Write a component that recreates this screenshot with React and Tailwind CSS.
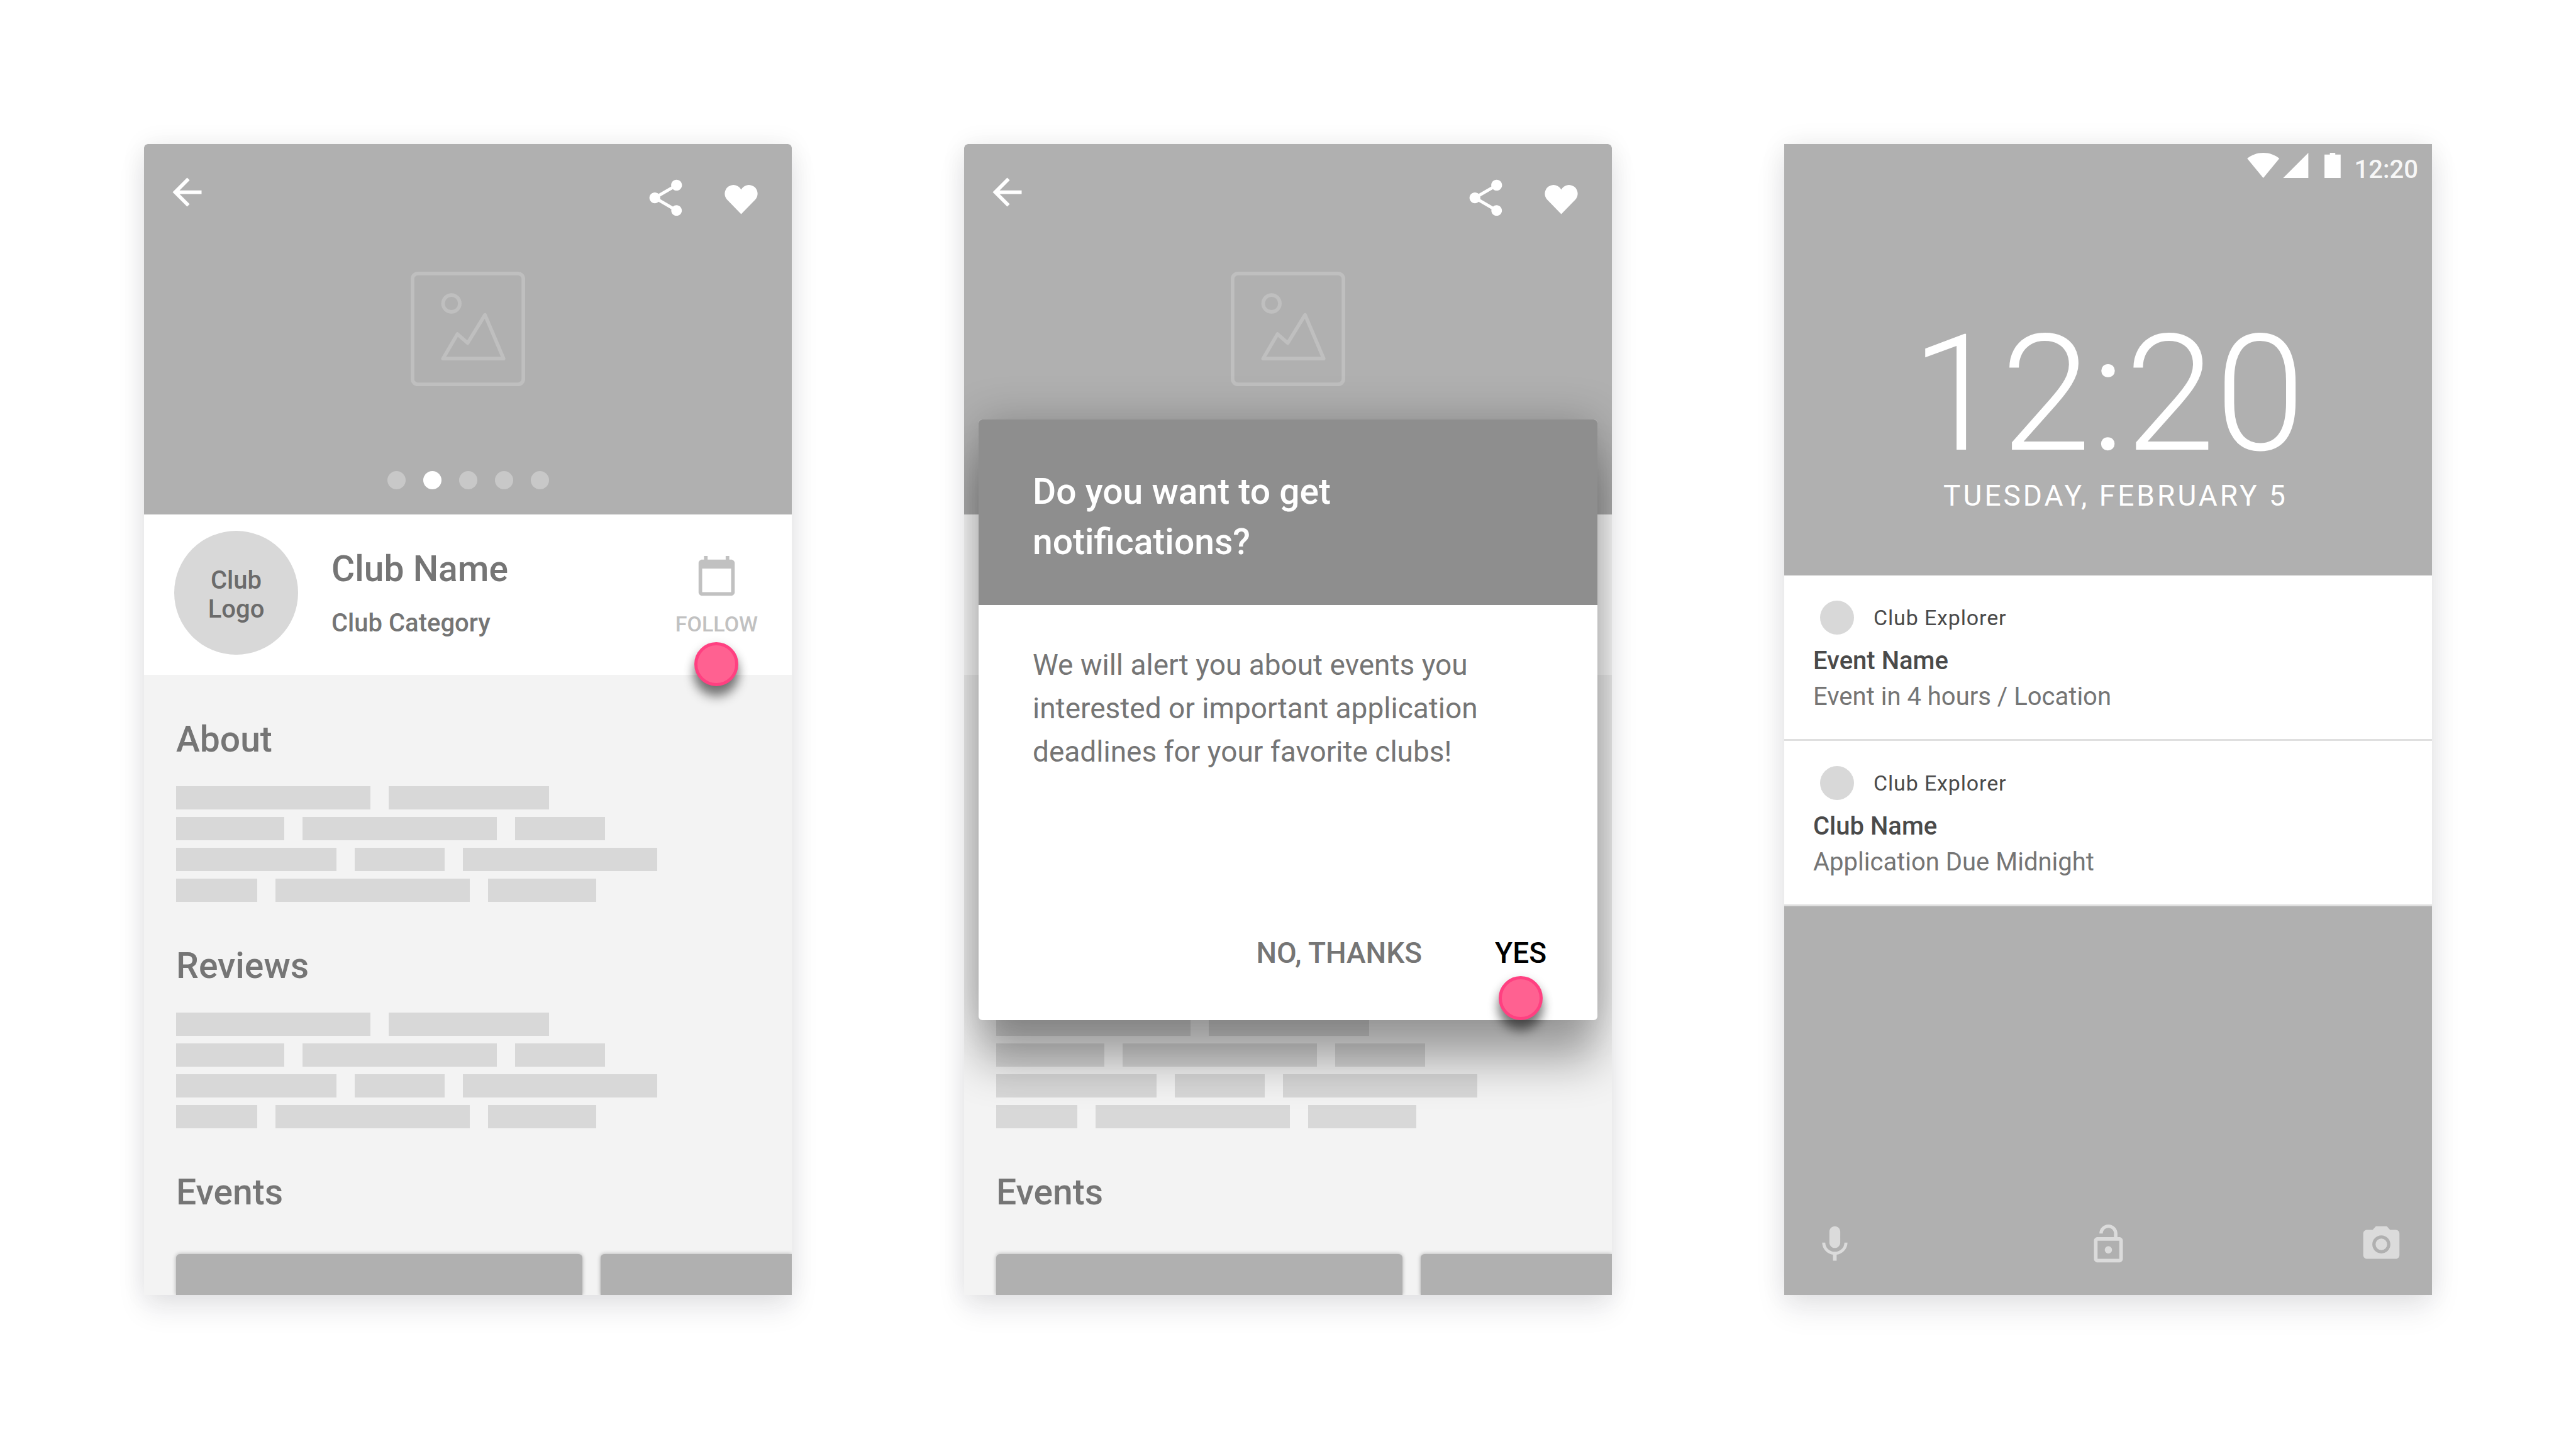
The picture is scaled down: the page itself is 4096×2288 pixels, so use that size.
const ICONS = {
  back: "M20 11H7.83l5.59-5.59L12 4l-8 8 8 8 1.41-1.41L7.83 13H20v-2z",
  share:
    "M18 16.08c-.76 0-1.44.3-1.96.77L8.91 12.7c.05-.23.09-.46.09-.7s-.04-.47-.09-.7l7.05-4.11c.54.5 1.25.81 2.04.81 1.66 0 3-1.34 3-3s-1.34-3-3-3-3 1.34-3 3c0 .24.04.47.09.7L8.04 9.81C7.5 9.31 6.79 9 6 9c-1.66 0-3 1.34-3 3s1.34 3 3 3c.79 0 1.5-.31 2.04-.81l7.12 4.16c-.05.21-.08.43-.08.65 0 1.61 1.31 2.92 2.92 2.92 1.61 0 2.92-1.31 2.92-2.92s-1.31-2.92-2.92-2.92z",
  heart: "M12 21L4.4 13.2A4.82 4.82 0 1 1 12 7.48A4.82 4.82 0 1 1 19.6 13.2Z",
  calendar:
    "M20 3h-1V1h-2v2H7V1H5v2H4c-1.1 0-2 .9-2 2v16c0 1.1.9 2 2 2h16c1.1 0 2-.9 2-2V5c0-1.1-.9-2-2-2zm0 18H4V8h16v13z",
  mic: "M12 14c1.66 0 2.99-1.34 2.99-3L15 5c0-1.66-1.34-3-3-3S9 3.34 9 5v6c0 1.66 1.34 3 3 3zm5.3-3c0 3-2.54 5.1-5.3 5.1S6.7 14 6.7 11H5c0 3.41 2.72 6.23 6 6.72V21h2v-3.28c3.28-.48 6-3.3 6-6.72h-1.7z",
  lockOpen:
    "M12 17c1.1 0 2-.9 2-2s-.9-2-2-2-2 .9-2 2 .9 2 2 2zm6-9h-1V6c0-2.76-2.24-5-5-5S7 3.24 7 6h1.9c0-1.71 1.39-3.1 3.1-3.1 1.71 0 3.1 1.39 3.1 3.1v2H6c-1.1 0-2 .9-2 2v10c0 1.1.9 2 2 2h12c1.1 0 2-.9 2-2V10c0-1.1-.9-2-2-2zm0 12H6V10h12v10z",
  camera:
    "M12 8.8a3.2 3.2 0 1 0 0 6.4a3.2 3.2 0 1 0 0-6.4zM9 2L7.17 4H4c-1.1 0-2 .9-2 2v12c0 1.1.9 2 2 2h16c1.1 0 2-.9 2-2V6c0-1.1-.9-2-2-2h-3.17L15 2H9zm3 15c-2.76 0-5-2.24-5-5s2.24-5 5-5 5 2.24 5 5-2.24 5-5 5z",
};

function Icon({ name }) {
  return (
    <svg viewBox="0 0 24 24" className="block size-[69px] fill-current" aria-hidden="true">
      <path d={ICONS[name]} />
    </svg>
  );
}

function IconButton({ name, label }) {
  return (
    <button type="button" aria-label={label}>
      <Icon name={name} />
    </button>
  );
}

function Phone({ children, className }) {
  return (
    <section
      className={`relative min-w-0 shadow-[0_23px_46px_rgba(20,25,45,0.09),0_0_40px_rgba(0,0,0,0.07)] ${className}`}
    >
      {children}
    </section>
  );
}

/* Circle that marks where the user taps. */
function TapMarker() {
  return (
    <span className="absolute top-full left-1/2 size-[70px] -translate-x-1/2 rounded-full border-[5px] border-[#ff4081] bg-[#ff6191] shadow-[0_17px_17px_rgba(0,0,0,0.45),0_6px_17px_rgba(0,0,0,0.2)]" />
  );
}

function Placeholder() {
  return (
    <svg viewBox="0 0 191 191" className="size-[182px] fill-none stroke-[#bfbfbf]" strokeWidth="6" strokeLinejoin="round" aria-hidden="true">
      <rect x="3" y="3" width="185" height="185" rx="9" />
      <circle cx="68" cy="53" r="14" />
      <path d="M54 145H155L124 72L95 119L78 104Z" />
    </svg>
  );
}

const DOTS = [false, true, false, false, false];

function Hero() {
  return (
    <header className="flex h-[589px] flex-col items-center rounded-t-[6px] bg-[#b0b0b0] pb-10 text-white">
      <div className="mb-[83px] flex w-full items-start justify-between pt-[42px] pr-[46px] pl-[34px]">
        <IconButton name="back" label="Back" />
        <div className="flex gap-[51px] pt-[9px]">
          <IconButton name="share" label="Share" />
          <IconButton name="heart" label="Favorite" />
        </div>
      </div>
      <Placeholder />
      <div className="mt-auto flex gap-7">
        {DOTS.map((on, i) => (
          <span key={i} className={`size-[29px] rounded-full ${on ? "bg-white" : "bg-[#c8c8c8]"}`} />
        ))}
      </div>
    </header>
  );
}

function ClubHeader({ marker }) {
  return (
    <div className="relative z-10 flex items-start bg-white pt-[26px] pr-[54px] pb-8 pl-12 font-medium">
      <div className="flex size-[197px] shrink-0 items-center justify-center rounded-full bg-[#d8d8d8] pt-[6px] text-center text-[40px] leading-[46px] text-[#6b6b6b]">
        Club
        <br />
        Logo
      </div>
      <div className="min-w-0 flex-1 pt-[27px] pl-[53px] text-[#757575]">
        <h1 className="text-[57px] leading-[68px]">Club Name</h1>
        <p className="pt-7 text-[40px] leading-[48px]">Club Category</p>
      </div>
      <button type="button" className="relative mt-[37px] flex flex-col items-center gap-[22px] pb-[9px] text-[34px] leading-[40px] text-[#c1c1c1]">
        <Icon name="calendar" />
        FOLLOW
        {marker && <TapMarker />}
      </button>
    </div>
  );
}

const BAR_ROWS = [
  ["w-[309px]", "w-[255px]"],
  ["w-[172px]", "w-[309px]", "w-[143px]"],
  ["w-[255px]", "w-[143px]", "w-[309px]"],
  ["w-[129px]", "w-[309px]", "w-[172px]"],
];

function TextBars() {
  return (
    <div className="flex flex-col gap-3 pt-10">
      {BAR_ROWS.map((row, i) => (
        <div key={i} className="flex gap-[29px]">
          {row.map((w, j) => (
            <span key={j} className={`h-[37px] bg-[#d8d8d8] ${w}`} />
          ))}
        </div>
      ))}
    </div>
  );
}

function Heading({ children }) {
  return <h2 className="text-[57px] leading-[68px] font-medium text-[#757575]">{children}</h2>;
}

function ClubPage({ marker }) {
  return (
    <div className="flex h-full flex-col overflow-hidden rounded-t-[6px] bg-[#f3f3f3]">
      <Hero />
      <ClubHeader marker={marker} />
      <div className="flex min-h-0 flex-1 flex-col gap-[68px] pt-[69px] pl-[51px]">
        <div>
          <Heading>About</Heading>
          <TextBars />
        </div>
        <div>
          <Heading>Reviews</Heading>
          <TextBars />
        </div>
        <div className="flex min-h-0 flex-1 flex-col">
          <Heading>Events</Heading>
          <div className="mt-16 flex flex-1 gap-[29px]">
            <div className="w-[646px] shrink-0 rounded-t-[6px] bg-[#b0b0b0] shadow-[0_0_6px_rgba(0,0,0,0.3)]" />
            <div className="flex-1 rounded-tl-[6px] bg-[#b0b0b0] shadow-[0_0_6px_rgba(0,0,0,0.3)]" />
          </div>
        </div>
      </div>
    </div>
  );
}

function Dialog() {
  return (
    <div
      role="dialog"
      aria-labelledby="dialog-title"
      className="absolute inset-x-[23px] top-[438px] z-20 flex h-[955px] flex-col rounded-[6px] bg-white shadow-[0_69px_69px_rgba(0,0,0,0.3),0_0_69px_rgba(0,0,0,0.22)]"
    >
      <h2
        id="dialog-title"
        className="rounded-t-[6px] bg-[#8e8e8e] pt-[75px] pr-[380px] pb-[60px] pl-[86px] text-[57px] leading-[80px] font-medium text-white"
      >
        Do you want to get notifications?
      </h2>
      <p className="flex-1 pt-[61px] pr-[160px] pl-[86px] text-[46px] leading-[69px] text-[#757575]">
        We will alert you about events you interested or important application deadlines for your favorite clubs!
      </p>
      <div className="flex justify-end gap-[116px] pr-[81px] pb-[70px] text-[46px] leading-[54px] font-medium">
        <button type="button" className="pb-[10px] text-[#757575]">NO, THANKS</button>
        <button type="button" className="relative pb-[10px] text-black">
          YES
          <TapMarker />
        </button>
      </div>
    </div>
  );
}

function Notification({ title, detail }) {
  return (
    <li className="border-b-[3px] border-[#dfdfdf] bg-white pt-10 pb-[39px] pl-[46px]">
      <div className="flex items-center gap-[31px] pl-[11px] text-[34px] leading-[40px] tracking-wide text-[#4a4a4a]">
        <span className="size-[54px] rounded-full bg-[#d8d8d8]" />
        Club Explorer
      </div>
      <h3 className="pt-[13px] text-[40px] leading-[57px] font-medium text-[#4a4a4a]">{title}</h3>
      <p className="text-[40px] leading-[57px] text-[#757575]">{detail}</p>
    </li>
  );
}

function LockScreen() {
  return (
    <div className="flex h-full flex-col bg-[#b0b0b0] text-white">
      <div className="flex h-[54px] items-end justify-end pr-[22px]">
        <svg viewBox="0 0 156 42" className="mr-[22px] h-[40px] w-[149px] fill-white" aria-hidden="true">
          <path d="M0 9.5C7 3.5 16.5 0 26.8 0S46.6 3.5 53.6 9.5L26.8 42z" />
          <path d="M102 0V42H60z" />
          <path d="M138 0h9v3h9v39h-27V3h9z" />
        </svg>
        <span className="-mb-[10px] text-[40px] leading-[46px] font-medium text-[#f7f7f7]">12:20</span>
      </div>
      <div className="flex h-[632px] flex-col items-center">
        <time className="pt-[210px] text-[258px] leading-[268px] font-light">12:20</time>
        <p className="pl-6 text-[46px] leading-[54px] tracking-[4px]">TUESDAY, FEBRUARY 5</p>
      </div>
      <ul>
        <Notification title="Event Name" detail="Event in 4 hours / Location" />
        <Notification title="Club Name" detail="Application Due Midnight" />
      </ul>
      <div className="mt-auto flex justify-between p-[46px] text-[#dbdbdb]">
        <IconButton name="mic" label="Voice search" />
        <IconButton name="lockOpen" label="Unlock" />
        <IconButton name="camera" label="Camera" />
      </div>
    </div>
  );
}

export default function App() {
  return (
    <main className="grid min-h-screen grid-cols-3 gap-[274px] bg-white p-[229px] font-[Roboto,sans-serif]">
      <Phone className="rounded-t-[6px]">
        <ClubPage marker />
      </Phone>
      <Phone className="overflow-hidden rounded-t-[6px]">
        <ClubPage />
        <Dialog />
      </Phone>
      <Phone className="">
        <LockScreen />
      </Phone>
    </main>
  );
}
